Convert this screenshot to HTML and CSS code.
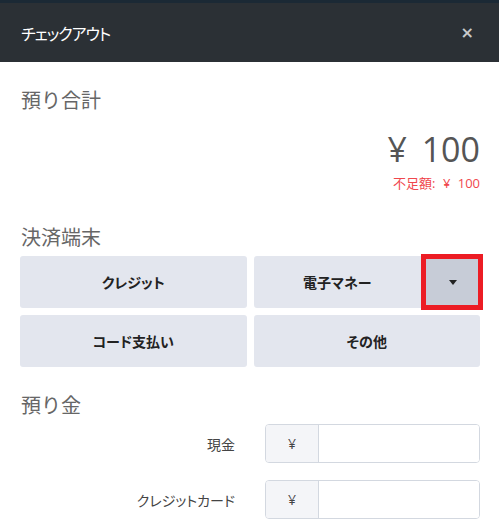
FILE: index.html
```html
<!DOCTYPE html>
<html lang="ja">
<head>
<meta charset="utf-8">
<title>チェックアウト</title>
<link rel="stylesheet" href="styles.css">
</head>
<body>
<div class="topstrip"></div>
<header class="header">
  <h1 class="title">チェックアウト</h1>
  <span class="close">×</span>
</header>
<main class="content">
  <h2 class="heading h-total">預り合計</h2>
  <div class="amount">¥ 100</div>
  <div class="shortage">不足額: ¥ 100</div>

  <h2 class="heading h-terminal">決済端末</h2>
  <div class="pay-grid">
    <button class="pay-btn">クレジット</button>
    <div class="split">
      <button class="pay-btn split-main">電子マネー</button>
      <button class="split-toggle"><span class="caret"></span></button>
    </div>
    <button class="pay-btn">コード支払い</button>
    <button class="pay-btn">その他</button>
  </div>

  <h2 class="heading h-deposit">預り金</h2>
  <div class="form-row">
    <label class="form-label">現金</label>
    <div class="input-group">
      <span class="prefix">¥</span>
      <input class="input" type="text">
    </div>
  </div>
  <div class="form-row">
    <label class="form-label">クレジットカード</label>
    <div class="input-group">
      <span class="prefix">¥</span>
      <input class="input" type="text">
    </div>
  </div>
</main>
</body>
</html>
```
FILE: styles.css
```css
* { box-sizing: border-box; }
html, body { margin: 0; padding: 0; background: #fff; }
body {
  font-family: "Open Sans", "Noto Sans CJK JP", sans-serif;
  color: #333;
  width: 499px;
  overflow: hidden;
}
.topstrip { height: 3px; background: #1b2935; }
.header {
  height: 59px;
  background: #2b3035;
  display: flex;
  align-items: center;
  justify-content: space-between;
  padding: 0 25px 0 21px;
}
.title {
  margin: 0;
  font-family: "Noto Sans CJK JP", sans-serif;
  font-feature-settings: "palt";
  font-size: 16px;
  letter-spacing: -1px;
  font-weight: 400;
  color: #fff;
  line-height: 20px;
}
.close {
  color: #c8cacc;
  font-family: "DejaVu Sans", sans-serif;
  font-size: 16px;
  font-weight: bold;
  line-height: 20px;
}
.content { padding: 0 19px 0 20px; }
.heading {
  margin: 0;
  font-family: "Noto Sans CJK JP", sans-serif;
  font-size: 20px;
  font-weight: 400;
  color: #666;
  line-height: 28px;
  padding-left: 1px;
}
.h-total { margin-top: 24px; }
.amount {
  text-align: right;
  font-size: 34px;
  line-height: 40px;
  color: #555;
  margin-top: 15px;
  word-spacing: 6px;
}
.shortage {
  text-align: right;
  font-family: "Open Sans", "Noto Sans CJK JP", sans-serif;
  font-size: 13px;
  line-height: 18px;
  color: #f0474d;
  margin-top: 5px;
  word-spacing: 4px;
}
.h-terminal { margin-top: 31px; }
.pay-grid {
  display: grid;
  grid-template-columns: 1fr 1fr;
  grid-auto-rows: 52px;
  gap: 7px;
  margin-top: 5px;
}
.pay-btn {
  border: 0;
  border-radius: 3px;
  background: #e3e6ee;
  font-family: "Noto Sans CJK JP", sans-serif;
  font-feature-settings: "palt";
  font-size: 14px;
  font-weight: 700;
  color: #222;
  padding: 0;
}
.split { display: flex; position: relative; }
.split-main { flex: 1; border-radius: 3px 0 0 3px; }
.split-toggle {
  width: 59px;
  border: 0;
  background: #c7ccd7;
  border-radius: 0 3px 3px 0;
  position: relative;
  display: flex;
  align-items: center;
  justify-content: center;
  padding: 0;
}
.split-toggle::after {
  content: "";
  position: absolute;
  top: -2px;
  bottom: -2px;
  left: 0;
  right: -3px;
  border: 5px solid #ec1c24;
}
.caret {
  width: 0;
  height: 0;
  border-left: 4px solid transparent;
  border-right: 4px solid transparent;
  border-top: 5px solid #222;
  margin-left: 4px;
}
.h-deposit { margin-top: 24px; }
.form-row {
  display: flex;
  align-items: center;
  margin-top: 5px;
}
.form-row + .form-row { margin-top: 17px; }
.form-label {
  width: 215px;
  text-align: right;
  font-family: "Noto Sans CJK JP", sans-serif;
  font-feature-settings: "palt";
  font-size: 14px;
  color: #444;
}
.input-group {
  margin-left: 30px;
  flex: 1;
  height: 39px;
  display: flex;
  border: 1px solid #d3d8e0;
  border-radius: 4px;
  overflow: hidden;
}
.prefix {
  width: 53px;
  background: #f4f5f8;
  border-right: 1px solid #d3d8e0;
  display: flex;
  align-items: center;
  justify-content: center;
  font-size: 14px;
  color: #444;
}
.input {
  flex: 1;
  border: 0;
  outline: none;
  min-width: 0;
  background: #fff;
}
```
